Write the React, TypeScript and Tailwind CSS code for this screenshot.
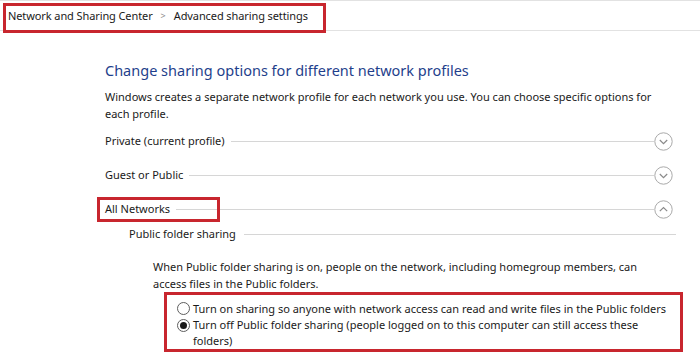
import React from "react";

function CircleChevron({ up }: { up?: boolean }) {
  return (
    <svg width="19" height="19" viewBox="0 0 19 19" className="shrink-0">
      <circle cx="9.5" cy="9.5" r="8.7" fill="none" stroke="#a9a9a9" strokeWidth="1" />
      <path
        d={up ? "M5.8 11.2 L9.5 7.5 L13.2 11.2" : "M5.8 8 L9.5 11.7 L13.2 8"}
        fill="none"
        stroke="#8a8a8a"
        strokeWidth="1.2"
      />
    </svg>
  );
}

function ProfileRow({ label, up, annotated }: { label: string; up?: boolean; annotated?: boolean }) {
  return (
    <div className="flex h-[34px] items-center">
      <span className="relative whitespace-nowrap leading-[16px]">
        {label}
        {annotated && (
          <span className="absolute left-[-8px] top-[-4px] h-[25px] w-[123px] border-[3px] border-[#c8262e]" />
        )}
      </span>
      <div className="ml-[6px] h-px flex-1 bg-[#d6d6d6]" />
      <CircleChevron up={up} />
    </div>
  );
}

function Radio({ checked }: { checked?: boolean }) {
  return (
    <span className="mr-[3px] mt-[2px] flex h-[13px] w-[13px] shrink-0 items-center justify-center rounded-full border border-[#5e5e5e] bg-white">
      {checked && <span className="h-[7px] w-[7px] rounded-full bg-[#1a1a1a]" />}
    </span>
  );
}

export default function App() {
  return (
    <div className="relative h-[364px] w-[700px] overflow-hidden bg-white font-['Noto_Sans',sans-serif] text-[11px] text-[#1a1a1a]">
      <div className="relative h-[31px] border-y border-[#e2e2e2]">
        <div className="flex h-full items-center pl-[8px] leading-[16px]">
          <span className="whitespace-nowrap tracking-[-0.1px]">Network and Sharing Center</span>
          <span className="mx-[8px] text-[9px] text-[#8a8a8a]">&gt;</span>
          <span className="whitespace-nowrap tracking-[-0.1px]">Advanced sharing settings</span>
        </div>
        <div className="absolute left-[3px] top-[2px] h-[30px] w-[323px] border-[3px] border-[#c8262e]" />
      </div>

      <div className="pl-[105px] pr-[27px]">
        <div className="mt-[29px] whitespace-nowrap text-[14.5px] leading-[20px] text-[#1f3f8c]">
          Change sharing options for different network profiles
        </div>
        <div className="mt-[8px] whitespace-nowrap leading-[17px]">
          Windows creates a separate network profile for each network you use. You can choose specific options for
          <br />
          each profile.
        </div>

        <div className="mt-[2px]">
          <ProfileRow label="Private (current profile)" />
          <ProfileRow label="Guest or Public" />
          <ProfileRow label="All Networks" up annotated />
        </div>

        <div className="flex h-[16px] items-center pl-[24px]">
          <span className="whitespace-nowrap leading-[16px]">Public folder sharing</span>
          <div className="ml-[8px] mr-[-3px] h-px flex-1 bg-[#d6d6d6]" />
        </div>

        <div className="mt-[16px] whitespace-nowrap pl-[48px] leading-[17px]">
          When Public folder sharing is on, people on the network, including homegroup members, can
          <br />
          access files in the Public folders.
        </div>

        <div className="ml-[59px] h-[60px] w-[519px] border-[3px] border-[#c8262e] pl-[10px] pt-[5px] leading-[16px]">
          <div className="flex h-[17px] items-start">
            <Radio />
            <span className="whitespace-nowrap leading-[17px]">
              Turn on sharing so anyone with network access can read and write files in the Public folders
            </span>
          </div>
          <div className="flex items-start">
            <Radio checked />
            <span className="whitespace-nowrap">
              Turn off Public folder sharing (people logged on to this computer can still access these
              <br />
              folders)
            </span>
          </div>
        </div>
      </div>
    </div>
  );
}
